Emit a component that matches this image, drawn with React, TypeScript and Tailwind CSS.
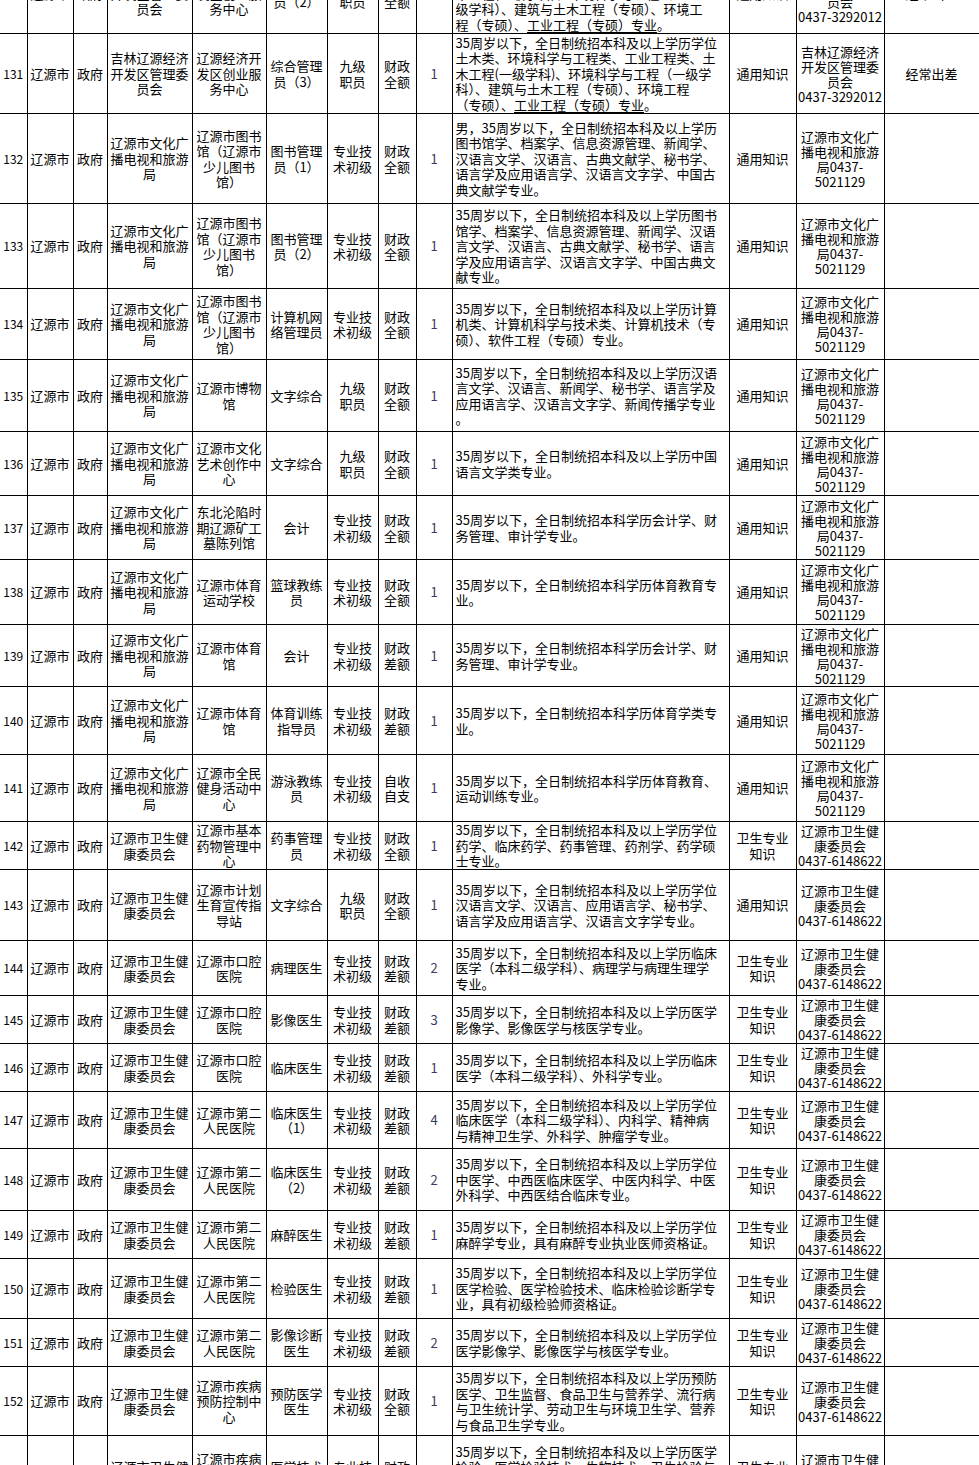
import React from "react";

type Row = {
  n: string;
  h: string;
  zg: string;
  dw: string;
  gw: string;
  jb: string;
  jf: string;
  rs: string;
  tj: string[];
  ks: string;
  zx: string;
  bz?: string;
};

const WH = "辽源市文化广\n播电视和旅游\n局";
const WH_ZX = "辽源市文化广\n播电视和旅游\n局0437-\n5021129";
const WS = "辽源市卫生健\n康委员会";
const WS_ZX = "辽源市卫生健\n康委员会\n0437-6148622";
const KF = "吉林辽源经济\n开发区管理委\n员会";
const KF_ZX = "吉林辽源经济\n开发区管理委\n员会\n0437-3292012";
const ZJ = "专业技\n术初级";
const JJ = "九级\n职员";

const rows: Row[] = [
  {
    n: "130", h: "h-[80px]", zg: KF, dw: "辽源经济开\n发区创业服\n务中心", gw: "综合管理\n员（2）", jb: JJ, jf: "财政\n全额", rs: "1",
    tj: [
      "35周岁以下，全日制统招本科及以上学历学位",
      "土木类、环境科学与工程类、工业工程类、土",
      "木工程(一级学科)、环境科学与工程（一",
      "级学科）、建筑与土木工程（专硕）、环境工",
      "程（专硕）、工业工程（专硕）专业。",
    ],
    ks: "通用知识", zx: KF_ZX, bz: "经常出差",
  },
  {
    n: "131", h: "h-[80px]", zg: KF, dw: "辽源经济开\n发区创业服\n务中心", gw: "综合管理\n员（3）", jb: JJ, jf: "财政\n全额", rs: "1",
    tj: [
      "35周岁以下，全日制统招本科及以上学历学位",
      "土木类、环境科学与工程类、工业工程类、土",
      "木工程(一级学科)、环境科学与工程（一级学",
      "科）、建筑与土木工程（专硕）、环境工程",
      "（专硕）、工业工程（专硕）专业。",
    ],
    ks: "通用知识", zx: KF_ZX, bz: "经常出差",
  },
  {
    n: "132", h: "h-[90px]", zg: WH, dw: "辽源市图书\n馆（辽源市\n少儿图书\n馆）", gw: "图书管理\n员（1）", jb: ZJ, jf: "财政\n全额", rs: "1",
    tj: [
      "男，35周岁以下，全日制统招本科及以上学历",
      "图书馆学、档案学、信息资源管理、新闻学、",
      "汉语言文学、汉语言、古典文献学、秘书学、",
      "语言学及应用语言学、汉语言文字学、中国古",
      "典文献学专业。",
    ],
    ks: "通用知识", zx: WH_ZX,
  },
  {
    n: "133", h: "h-[85px]", zg: WH, dw: "辽源市图书\n馆（辽源市\n少儿图书\n馆）", gw: "图书管理\n员（2）", jb: ZJ, jf: "财政\n全额", rs: "1",
    tj: [
      "35周岁以下，全日制统招本科及以上学历图书",
      "馆学、档案学、信息资源管理、新闻学、汉语",
      "言文学、汉语言、古典文献学、秘书学、语言",
      "学及应用语言学、汉语言文字学、中国古典文",
      "献专业。",
    ],
    ks: "通用知识", zx: WH_ZX,
  },
  {
    n: "134", h: "h-[71px]", zg: WH, dw: "辽源市图书\n馆（辽源市\n少儿图书\n馆）", gw: "计算机网\n络管理员", jb: ZJ, jf: "财政\n全额", rs: "1",
    tj: [
      "35周岁以下，全日制统招本科及以上学历计算",
      "机类、计算机科学与技术类、计算机技术（专",
      "硕）、软件工程（专硕）专业。",
    ],
    ks: "通用知识", zx: WH_ZX,
  },
  {
    n: "135", h: "h-[72px]", zg: WH, dw: "辽源市博物\n馆", gw: "文字综合", jb: JJ, jf: "财政\n全额", rs: "1",
    tj: [
      "35周岁以下，全日制统招本科及以上学历汉语",
      "言文学、汉语言、新闻学、秘书学、语言学及",
      "应用语言学、汉语言文字学、新闻传播学专业",
      "。",
    ],
    ks: "通用知识", zx: WH_ZX,
  },
  {
    n: "136", h: "h-[64px]", zg: WH, dw: "辽源市文化\n艺术创作中\n心", gw: "文字综合", jb: JJ, jf: "财政\n全额", rs: "1",
    tj: ["35周岁以下，全日制统招本科及以上学历中国", "语言文学类专业。"],
    ks: "通用知识", zx: WH_ZX,
  },
  {
    n: "137", h: "h-[64px]", zg: WH, dw: "东北沦陷时\n期辽源矿工\n墓陈列馆", gw: "会计", jb: ZJ, jf: "财政\n全额", rs: "1",
    tj: ["35周岁以下，全日制统招本科学历会计学、财", "务管理、审计学专业。"],
    ks: "通用知识", zx: WH_ZX,
  },
  {
    n: "138", h: "h-[65px]", zg: WH, dw: "辽源市体育\n运动学校", gw: "篮球教练\n员", jb: ZJ, jf: "财政\n全额", rs: "1",
    tj: ["35周岁以下，全日制统招本科学历体育教育专", "业。"],
    ks: "通用知识", zx: WH_ZX,
  },
  {
    n: "139", h: "h-[62px]", zg: WH, dw: "辽源市体育\n馆", gw: "会计", jb: ZJ, jf: "财政\n差额", rs: "1",
    tj: ["35周岁以下，全日制统招本科学历会计学、财", "务管理、审计学专业。"],
    ks: "通用知识", zx: WH_ZX,
  },
  {
    n: "140", h: "h-[68px]", zg: WH, dw: "辽源市体育\n馆", gw: "体育训练\n指导员", jb: ZJ, jf: "财政\n差额", rs: "1",
    tj: ["35周岁以下，全日制统招本科学历体育学类专", "业。"],
    ks: "通用知识", zx: WH_ZX,
  },
  {
    n: "141", h: "h-[67px]", zg: WH, dw: "辽源市全民\n健身活动中\n心", gw: "游泳教练\n员", jb: ZJ, jf: "自收\n自支", rs: "1",
    tj: ["35周岁以下，全日制统招本科学历体育教育、", "运动训练专业。"],
    ks: "通用知识", zx: WH_ZX,
  },
  {
    n: "142", h: "h-[48px]", zg: WS, dw: "辽源市基本\n药物管理中\n心", gw: "药事管理\n员", jb: ZJ, jf: "财政\n全额", rs: "1",
    tj: [
      "35周岁以下，全日制统招本科及以上学历学位",
      "药学、临床药学、药事管理、药剂学、药学硕",
      "士专业。",
    ],
    ks: "卫生专业\n知识", zx: WS_ZX,
  },
  {
    n: "143", h: "h-[71px]", zg: WS, dw: "辽源市计划\n生育宣传指\n导站", gw: "文字综合", jb: JJ, jf: "财政\n全额", rs: "1",
    tj: [
      "35周岁以下，全日制统招本科及以上学历学位",
      "汉语言文学、汉语言、应用语言学、秘书学、",
      "语言学及应用语言学、汉语言文字学专业。",
    ],
    ks: "通用知识", zx: WS_ZX,
  },
  {
    n: "144", h: "h-[55px]", zg: WS, dw: "辽源市口腔\n医院", gw: "病理医生", jb: ZJ, jf: "财政\n差额", rs: "2",
    tj: [
      "35周岁以下，全日制统招本科及以上学历临床",
      "医学（本科二级学科）、病理学与病理生理学",
      "专业。",
    ],
    ks: "卫生专业\n知识", zx: WS_ZX,
  },
  {
    n: "145", h: "h-[48px]", zg: WS, dw: "辽源市口腔\n医院", gw: "影像医生", jb: ZJ, jf: "财政\n差额", rs: "3",
    tj: ["35周岁以下，全日制统招本科及以上学历医学", "影像学、影像医学与核医学专业。"],
    ks: "卫生专业\n知识", zx: WS_ZX,
  },
  {
    n: "146", h: "h-[48px]", zg: WS, dw: "辽源市口腔\n医院", gw: "临床医生", jb: ZJ, jf: "财政\n差额", rs: "1",
    tj: ["35周岁以下，全日制统招本科及以上学历临床", "医学（本科二级学科）、外科学专业。"],
    ks: "卫生专业\n知识", zx: WS_ZX,
  },
  {
    n: "147", h: "h-[57px]", zg: WS, dw: "辽源市第二\n人民医院", gw: "临床医生\n（1）", jb: ZJ, jf: "财政\n差额", rs: "4",
    tj: [
      "35周岁以下，全日制统招本科及以上学历学位",
      "临床医学（本科二级学科）、内科学、精神病",
      "与精神卫生学、外科学、肿瘤学专业。",
    ],
    ks: "卫生专业\n知识", zx: WS_ZX,
  },
  {
    n: "148", h: "h-[62px]", zg: WS, dw: "辽源市第二\n人民医院", gw: "临床医生\n（2）", jb: ZJ, jf: "财政\n差额", rs: "2",
    tj: [
      "35周岁以下，全日制统招本科及以上学历学位",
      "中医学、中西医临床医学、中医内科学、中医",
      "外科学、中西医结合临床专业。",
    ],
    ks: "卫生专业\n知识", zx: WS_ZX,
  },
  {
    n: "149", h: "h-[48px]", zg: WS, dw: "辽源市第二\n人民医院", gw: "麻醉医生", jb: ZJ, jf: "财政\n差额", rs: "1",
    tj: ["35周岁以下，全日制统招本科及以上学历学位", "麻醉学专业，具有麻醉专业执业医师资格证。"],
    ks: "卫生专业\n知识", zx: WS_ZX,
  },
  {
    n: "150", h: "h-[60px]", zg: WS, dw: "辽源市第二\n人民医院", gw: "检验医生", jb: ZJ, jf: "财政\n差额", rs: "1",
    tj: [
      "35周岁以下，全日制统招本科及以上学历学位",
      "医学检验、医学检验技术、临床检验诊断学专",
      "业，具有初级检验师资格证。",
    ],
    ks: "卫生专业\n知识", zx: WS_ZX,
  },
  {
    n: "151", h: "h-[48px]", zg: WS, dw: "辽源市第二\n人民医院", gw: "影像诊断\n医生", jb: ZJ, jf: "财政\n差额", rs: "2",
    tj: ["35周岁以下，全日制统招本科及以上学历学位", "医学影像学、影像医学与核医学专业。"],
    ks: "卫生专业\n知识", zx: WS_ZX,
  },
  {
    n: "152", h: "h-[69px]", zg: WS, dw: "辽源市疾病\n预防控制中\n心", gw: "预防医学\n医生", jb: ZJ, jf: "财政\n全额", rs: "1",
    tj: [
      "35周岁以下，全日制统招本科及以上学历预防",
      "医学、卫生监督、食品卫生与营养学、流行病",
      "与卫生统计学、劳动卫生与环境卫生学、营养",
      "与食品卫生学专业。",
    ],
    ks: "卫生专业\n知识", zx: WS_ZX,
  },
  {
    n: "153", h: "h-[78px]", zg: WS, dw: "辽源市疾病\n预防控制中\n心", gw: "医学技术\n员", jb: ZJ, jf: "财政\n全额", rs: "1",
    tj: [
      "35周岁以下，全日制统招本科及以上学历医学",
      "检验、医学检验技术、生物技术、卫生检验与",
      "检疫技术、卫生检验与检疫、医学实验技术专",
      "业。",
    ],
    ks: "卫生专业\n知识", zx: WS_ZX,
  },
];

const UL = "工业工程（专硕）专业";

function Line({ text }: { text: string }) {
  const i = text.indexOf(UL);
  if (i < 0) return <div>{text}</div>;
  return (
    <div>
      {text.slice(0, i)}
      <span className="underline underline-offset-2">{UL}</span>
      {text.slice(i + UL.length)}
    </div>
  );
}

const td = "border border-black p-0 text-center align-middle whitespace-pre-line overflow-hidden";

export default function App() {
  return (
    <div className="w-[979px] h-[1465px] overflow-hidden bg-white text-black font-[family-name:'Noto_Sans_CJK_SC','Liberation_Sans',sans-serif] text-[13px] leading-[15.5px]">
      <table className="table-fixed border-collapse w-[979px] -mt-[47px]">
        <colgroup>
          <col className="w-[27px]" />
          <col className="w-[46px]" />
          <col className="w-[34px]" />
          <col className="w-[85px]" />
          <col className="w-[74px]" />
          <col className="w-[61px]" />
          <col className="w-[51px]" />
          <col className="w-[38px]" />
          <col className="w-[36px]" />
          <col className="w-[277px]" />
          <col className="w-[67px]" />
          <col className="w-[88px]" />
          <col className="w-[95px]" />
        </colgroup>
        <tbody>
          {rows.map((r) => (
            <tr key={r.n} className={r.h}>
              <td className={`${td} border-l-0 text-[12px]`}>{r.n}</td>
              <td className={td}>辽源市</td>
              <td className={td}>政府</td>
              <td className={td}>{r.zg}</td>
              <td className={td}>{r.dw}</td>
              <td className={td}>{r.gw}</td>
              <td className={td}>{r.jb}</td>
              <td className={td}>{r.jf}</td>
              <td className={`${td} text-[#3a3a5c]`}>{r.rs}</td>
              <td className="border border-black p-0 pl-[3px] text-left align-middle whitespace-nowrap overflow-hidden">
                {r.tj.map((t, i) => (
                  <Line key={i} text={t} />
                ))}
              </td>
              <td className={td}>{r.ks}</td>
              <td className={`${td} leading-[15px]`}>{r.zx}</td>
              <td className={td}>{r.bz ?? ""}</td>
            </tr>
          ))}
        </tbody>
      </table>
    </div>
  );
}
